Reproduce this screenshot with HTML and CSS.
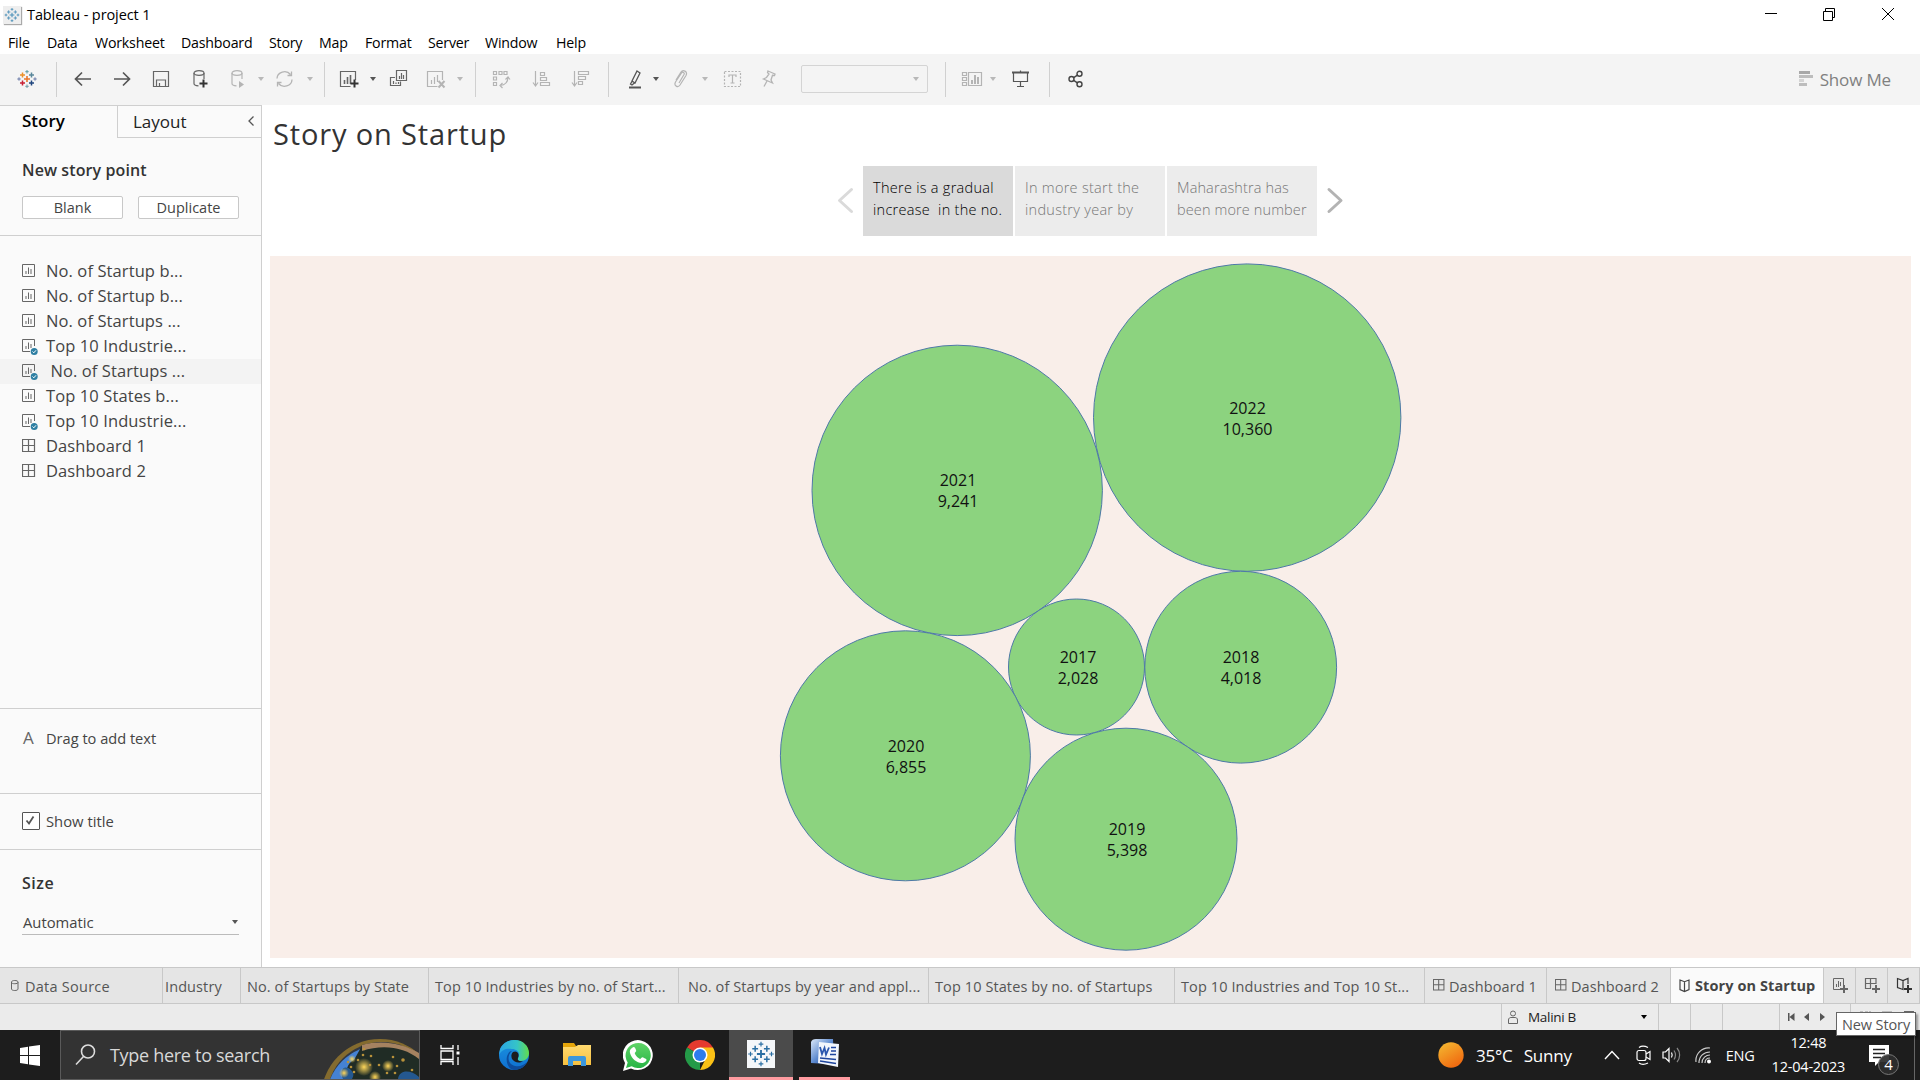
FILE: index.html
```html
<!DOCTYPE html>
<html lang="en">
<head>
<meta charset="utf-8">
<title>Tableau - project 1</title>
<link rel="stylesheet" href="styles.css">
</head>
<body>
<svg class="defs" width="0" height="0" aria-hidden="true">
  <defs>
    <linearGradient id="edgeA" x1="0" y1="0" x2="1" y2="0"><stop offset="0" stop-color="#2aa5e6"/><stop offset=".6" stop-color="#35c4c8"/><stop offset="1" stop-color="#63dd4a"/></linearGradient>
    <linearGradient id="edgeB" x1="0" y1="0" x2="0" y2="1"><stop offset="0" stop-color="#1b95e0"/><stop offset="1" stop-color="#0f6fd0"/></linearGradient>
    <linearGradient id="wa" x1="0" y1="0" x2="0" y2="1"><stop offset="0" stop-color="#5fd467"/><stop offset="1" stop-color="#28b446"/></linearGradient>
    <linearGradient id="fold" x1="0" y1="0" x2="0" y2="1"><stop offset="0" stop-color="#ffda70"/><stop offset="1" stop-color="#f7c040"/></linearGradient>
    <linearGradient id="sun" x1="0" y1="0" x2=".6" y2="1"><stop offset="0" stop-color="#f4bd33"/><stop offset="1" stop-color="#f06a10"/></linearGradient>
    <linearGradient id="wordA" x1="0" y1="0" x2="1" y2="1"><stop offset="0" stop-color="#dce8f8"/><stop offset=".5" stop-color="#5f8cd0"/><stop offset="1" stop-color="#143d94"/></linearGradient>
    <radialGradient id="glow"><stop offset="0" stop-color="#ffd75a"/><stop offset="1" stop-color="#ffd75a" stop-opacity="0"/></radialGradient>
  </defs>
  <symbol id="caret" viewBox="0 0 8 6"><path d="M1 1h6L4 5z"/></symbol>
  <symbol id="sheet" viewBox="0 0 16 16"><path d="M.5.5h12v12H.5z" fill="none" stroke="#666"/><path d="M4 7v3M6.500 3.500v6.500M9 5v5" stroke="#666"/></symbol>
  <symbol id="sheetcheck" viewBox="0 0 16 16"><path d="M12.500 7V.5H.5v12H8" fill="none" stroke="#666"/><path d="M4 7v3M6.500 3.500v6.500M9 5v4" stroke="#666"/><circle cx="12.200" cy="12.500" r="3.500" fill="#2e7fa3"/><path d="M10.500 12.500l1.300 1.300 2.200-2.500" fill="none" stroke="#fff"/></symbol>
  <symbol id="dash" viewBox="0 0 16 16"><path d="M.5.5h12v12H.5zM6.500.5v12M.5 6.500h12" fill="none" stroke="#666" stroke-width="1.200"/></symbol>
  <symbol id="book" viewBox="0 0 14 14"><path d="M1 1l4.500 1.700L10 1v9.500L5.500 12.500 1 10.500zM5.500 2.700v9.800" fill="none" stroke="currentColor" stroke-width="1.200"/></symbol>
  <symbol id="tableau" viewBox="0 0 24 24"><path d="M12 8.500v7M8.500 12h7" stroke-width="1.600"/><path d="M7 5v5M4.500 7.500h5M17 5v5M14.500 7.500h5M7 14v5M4.500 16.500h5M17 14v5M14.500 16.500h5" stroke-width="1.300"/><path d="M12 1.500v4M10 3.500h4M12 18.500v4M10 20.500h4M3 10v4M1 12h4M21 10v4M19 12h4"/></symbol>
</svg>

<header class="titlebar">
  <span class="appicon"><svg width="16" height="16" stroke="#4a90b8" stroke-width="1.300"><use href="#tableau"/></svg></span>
  <span class="apptitle">Tableau - project 1</span>
  <svg class="winbtns" width="132" height="24" fill="none" stroke="#000"><path d="M1 13.500h12M59.500 11.500h9v9h-9zM61.500 11V8.500h9v9h-2M118 8l12 12M130 8l-12 12"/></svg>
</header>
<nav class="menu"><span>File</span><span>Data</span><span>Worksheet</span><span>Dashboard</span><span>Story</span><span>Map</span><span>Format</span><span>Server</span><span>Window</span><span>Help</span></nav>

<div class="toolbar">
  <svg class="g15" width="24" height="24" viewBox="0 0 24 24"><path d="M12 9v6M9 12h6" stroke="#e8762b" stroke-width="1.600"/><path d="M7.500 5.500v5M5 8h5" stroke="#eb9129" stroke-width="1.500"/><path d="M16.500 5.500v5M14 8h5" stroke="#59879b" stroke-width="1.500"/><path d="M7.500 13.500v5M5 16h5" stroke="#c72035" stroke-width="1.500"/><path d="M16.500 13.500v5M14 16h5" stroke="#1f457e" stroke-width="1.500"/><path d="M12 3v3.500M10.300 4.700h3.400" stroke="#5b9aa0"/><path d="M12 17.500V21M10.300 19.300h3.400" stroke="#7099a6"/><path d="M4 10.300v3.400M2.300 12h3.400M20 10.300v3.400M18.300 12h3.400" stroke="#6b7ba8"/></svg>
  <i class="sep g17"></i>
  <svg class="g16" width="20" height="20" fill="none" stroke="#555" stroke-width="1.700"><path d="M18 10H3M9 3.500L2.500 10 9 16.500"/></svg>
  <svg class="g19" width="20" height="20" fill="none" stroke="#555" stroke-width="1.700"><path d="M2 10h15M11 3.500l6.500 6.500-6.500 6.500"/></svg>
  <svg class="g19" width="20" height="20" fill="none" stroke="#666" stroke-width="1.200"><path d="M2.500 2.500h15v15h-15zM5.500 17v-6h9v6M8.500 17v-3"/></svg>
  <svg class="g19" width="20" height="20" fill="none" stroke="#666" stroke-width="1.200"><ellipse cx="9" cy="4" rx="5" ry="2.300"/><path d="M4 4v10.500c0 1.400 2 2.200 4.500 2.400M14 4v6"/><path d="M13.500 10.500v8M9.500 14.500h8" stroke="#333" stroke-width="2"/></svg>
  <svg class="g17" width="20" height="20" fill="none" stroke="#b4b4b4" stroke-width="1.200"><ellipse cx="10" cy="4" rx="5" ry="2.300"/><path d="M5 4v10.500c0 1.400 2 2.200 4.500 2.400M15 4v6"/><path d="M12 12l5 3.500-5 3.500z" fill="#b4b4b4" stroke="none"/></svg>
  <svg class="caret off g10"><use href="#caret"/></svg>
  <svg class="g10" width="20" height="20" fill="none" stroke="#b4b4b4" stroke-width="1.300"><path d="M2 9.500a7.500 7 0 0 1 13.500-4M17 10.500a7.500 7 0 0 1-13.500 4M16.500 2.500v4h-4M2.500 17.500v-4h4"/></svg>
  <svg class="caret off g11"><use href="#caret"/></svg>
  <i class="sep g10"></i>
  <svg class="g14" width="20" height="20" fill="none" stroke="#666" stroke-width="1.200"><path d="M16.500 11V2.500h-15v15h10"/><path d="M5.500 11v4M8.500 8v7M11.500 6v9" stroke-width="1.600"/><path d="M15.500 10.500v8M11.500 14.500h8" stroke="#333" stroke-width="2"/></svg>
  <svg class="caret on g10"><use href="#caret"/></svg>
  <svg class="g11" width="20" height="20" fill="none" stroke="#666" stroke-width="1.200"><path d="M8.500 1.500h10v10h-10zM7 8.500H2.500v8h10v-4M5.500 12v3M8 13.500V15M10.500 13v2M11.500 7v3M13.500 4v6M15.500 6v4"/></svg>
  <svg class="g18" width="20" height="20" fill="none" stroke="#b4b4b4" stroke-width="1.200"><path d="M16.500 11V2.500h-15v15h10M5.500 11v4M8.500 8v7M11.500 6v7"/><path d="M12.500 12l6 6.500M18.500 12l-6 6.500" stroke-width="2"/></svg>
  <svg class="caret off g10"><use href="#caret"/></svg>
  <i class="sep g11"></i>
  <svg class="g15" width="20" height="20" fill="none" stroke="#b4b4b4" stroke-width="1.200"><path d="M2.500 2.500h3v3h-3zM8 2.500h3v3H8zM13 2.500h3v3h-3zM2.500 8h3v3h-3zM2.500 13.500h3v3h-3z"/><path d="M17 8c0 5-3 8-8 8.500M14.500 10.500L17 8l2 2.500M11.500 14L9 16.500l2.500 2.500"/></svg>
  <svg class="g20" width="20" height="20" fill="none" stroke="#b4b4b4" stroke-width="1.200"><path d="M4.500 2v14M2 13.500L4.500 17 7 13.500M9.500 3.500h4v3h-4zM9.500 8.500h6v3h-6zM9.500 13.500h9v3h-9z"/></svg>
  <svg class="g19" width="20" height="20" fill="none" stroke="#b4b4b4" stroke-width="1.200"><path d="M4.500 2v14M2 13.500L4.500 17 7 13.500M8.500 2.500h10v3h-10zM8.500 7.500h7v3h-7zM8.500 12.500h4v3h-4z"/></svg>
  <i class="sep g18"></i>
  <svg class="g16" width="20" height="20" fill="none" stroke="#555" stroke-width="1.300"><path d="M12 2l3 2-5 10-3-2zM7.500 11.500L5.500 15l1.500 1 3-2.500"/><path d="M4 18.500h12" stroke-width="2"/></svg>
  <svg class="caret on g7"><use href="#caret"/></svg>
  <svg class="g11" width="20" height="20" fill="none" stroke="#b4b4b4" stroke-width="1.200"><path d="M8 14l5-8.500c1-2-1.500-3-2.500-1.500L4.500 13c-2 4 2.500 6 4.500 3l6-9.500c2-4-3-6.500-5-3.500L5 11"/></svg>
  <svg class="caret off g10"><use href="#caret"/></svg>
  <svg class="g13" width="20" height="20" fill="none" stroke="#b4b4b4" stroke-width="1.200"><path d="M2.500 2.500h16v15h-16z" stroke-dasharray="2 1.500"/><path d="M7 8V6h7v2M10.500 6v8M8.500 14h4"/></svg>
  <svg class="g17" width="20" height="20" fill="none" stroke="#b4b4b4" stroke-width="1.300"><path d="M9 2l7 3-.5 1.500-2-.2L12 11l1.500 3-9-4 3-1.500L10 5 8.500 3.500zM8 12l-3 5.500"/></svg>
  <div class="combo g22"><svg class="caret off"><use href="#caret"/></svg></div>
  <i class="sep g17"></i>
  <svg class="g15" width="22" height="20" fill="none" stroke="#b4b4b4" stroke-width="1.200"><path d="M1.500 3.500h4v3h-4zM1.500 8.500h4v3h-4zM1.500 13.500h4v3h-4zM7.500 3.500h13v13h-13z"/><path d="M11 11v4M14 6v9M17 8v7" stroke-width="2"/></svg>
  <svg class="caret off g6"><use href="#caret"/></svg>
  <svg class="g13" width="20" height="20" fill="none" stroke="#555" stroke-width="1.200"><path d="M3.500 4v8.500h14V4M10.500 1.500V3M10.500 12.500v5M7 17.500h7"/><path d="M2 3.500h17" stroke-width="2"/></svg>
  <i class="sep g19"></i>
  <svg class="g16" width="20" height="20" fill="none" stroke="#444" stroke-width="1.400"><circle cx="5.500" cy="10" r="2.500"/><circle cx="13.500" cy="4.800" r="2.500"/><circle cx="13.500" cy="15.200" r="2.500"/><path d="M7.700 8.700l3.700-2.500M7.700 11.300l3.700 2.500"/></svg>
  <div class="showme"><svg width="14" height="16"><path d="M0 0h11v3H0z" fill="#a8a8a8"/><path d="M0 4h14v3H0zM0 12h8v3H0z" fill="#bdbdbd"/><path d="M0 8h5v3H0z" fill="#d4d4d4"/></svg><span>Show Me</span></div>
</div>

<main class="workspace">
  <aside class="side">
    <div class="tabs"><div class="tab active">Story</div><div class="tab other"><span>Layout</span><svg width="8" height="12" fill="none" stroke="#555" stroke-width="1.300"><path d="M6.500 1.500L2 6l4.500 4.500"/></svg></div></div>
    <section class="newpoint"><h2>New story point</h2><div class="buttons"><button>Blank</button><button>Duplicate</button></div></section>
    <ul class="sheets">
      <li><svg><use href="#sheet"/></svg>No. of Startup b...</li>
      <li><svg><use href="#sheet"/></svg>No. of Startup b...</li>
      <li><svg><use href="#sheet"/></svg>No. of Startups ...</li>
      <li><svg><use href="#sheetcheck"/></svg>Top 10 Industrie...</li>
      <li class="hover"><svg><use href="#sheetcheck"/></svg>&nbsp;No. of Startups ...</li>
      <li><svg><use href="#sheet"/></svg>Top 10 States b...</li>
      <li><svg><use href="#sheetcheck"/></svg>Top 10 Industrie...</li>
      <li><svg><use href="#dash"/></svg>Dashboard 1</li>
      <li><svg><use href="#dash"/></svg>Dashboard 2</li>
    </ul>
    <section class="drag"><b>A</b><span>Drag to add text</span></section>
    <section class="showtitle"><i class="check"><svg width="16" height="16" fill="none" stroke="#555" stroke-width="1.800"><path d="M3.500 7.500l2.500 3 4.500-7"/></svg></i><span>Show title</span></section>
    <section class="size"><h2>Size</h2><div class="select"><span>Automatic</span><svg class="caret on"><use href="#caret"/></svg></div></section>
  </aside>

  <section class="story">
    <h1>Story on Startup</h1>
    <div class="points">
      <svg width="20" height="30" fill="none" stroke="#dadada" stroke-width="3" stroke-linecap="round" stroke-linejoin="round"><path d="M15.500 3.500L3.500 14.500l12 11"/></svg>
      <div class="point current">There is a gradual<br>increase&nbsp; in the no.</div>
      <div class="point">In more start the<br>industry year by</div>
      <div class="point">Maharashtra has<br>been more number</div>
      <svg class="next" width="20" height="30" fill="none" stroke="#b3b3b3" stroke-width="3" stroke-linecap="round" stroke-linejoin="round"><path d="M4 3.500l12 11-12 11"/></svg>
    </div>
    <svg class="viz" width="1641" height="702" viewBox="270 256 1641 702">
      <g fill="#8cd37f" stroke="#4e79a7">
        <circle cx="1247.200" cy="417.600" r="153.700"/><circle cx="957.200" cy="490.400" r="145.200"/><circle cx="1076.500" cy="667" r="68"/><circle cx="1240.700" cy="667.200" r="95.900"/><circle cx="905.400" cy="755.800" r="125"/><circle cx="1126" cy="839.200" r="111"/>
      </g>
      <g class="marks">
        <text x="1247.500" y="414">2022</text><text x="1247.500" y="435">10,360</text>
        <text x="958" y="486">2021</text><text x="958" y="507">9,241</text>
        <text x="1078" y="663">2017</text><text x="1078" y="684">2,028</text>
        <text x="1241" y="663">2018</text><text x="1241" y="684">4,018</text>
        <text x="906" y="752">2020</text><text x="906" y="773">6,855</text>
        <text x="1127" y="835">2019</text><text x="1127" y="856">5,398</text>
      </g>
    </svg>
  </section>
</main>

<nav class="sheettabs">
  <div class="source"><svg width="10" height="14" fill="none" stroke="#666"><path d="M1.500 3c0-2 6.500-2 6.500 0v7c0 2-6.500 2-6.500 0zM1.500 3.500c0 1.600 6.500 1.600 6.500 0"/></svg><span>Data Source</span></div>
  <div class="cut">Industry</div>
  <div>No. of Startups by State</div>
  <div>Top 10 Industries by no. of Start...</div>
  <div class="lead">No. of Startups by year and appl...</div>
  <div>Top 10 States by no. of Startups</div>
  <div>Top 10 Industries and Top 10 St...</div>
  <div class="iconed"><svg><use href="#dash"/></svg><span>Dashboard 1</span></div>
  <div class="iconed"><svg><use href="#dash"/></svg><span>Dashboard 2</span></div>
  <div class="iconed current"><svg><use href="#book"/></svg><span>Story on Startup</span></div>
  <div class="new"><svg width="18" height="18" fill="none" stroke="#666"><path d="M11.500 8V1.500h-10v11H8M4.500 7v3M6.500 4v6M8.500 5v4"/><path d="M12 8v8M8 12h8" stroke-width="2"/></svg></div>
  <div class="new"><svg width="18" height="18" fill="none" stroke="#666" stroke-width="1.200"><path d="M12 7V1.500H1.500v10H7M6.500 1.500v10M1.500 6.500H12"/><path d="M12 8v8M8 12h8" stroke-width="2"/></svg></div>
  <div class="new"><svg width="18" height="18" fill="none" stroke="#333" stroke-width="1.200"><path d="M12 7V1.500L7 3.500 1.500 1.500v9L7 12.500v-9"/><path d="M12 8v8M8 12h8" stroke-width="2"/></svg></div>
</nav>

<div class="status">
  <div></div>
  <div class="user"><svg width="12" height="16" fill="none" stroke="#666"><circle cx="6" cy="4.500" r="2.500"/><path d="M1.500 14.500v-3.500c0-2 1.500-2.500 2.500-2.500h4c1 0 2.500.5 2.500 2.500v3.500z"/></svg><span>Malini B</span><svg class="caret black"><use href="#caret"/></svg></div>
  <div></div><div></div><div></div>
  <div class="nav"><svg width="50" height="10" fill="#555"><path d="M1 1h1.500v8H1zM7.500 1v8L2.500 5zM22 1v8l-5-4zM33 1v8l5-4z"/></svg></div>
  <div class="views"><svg width="70" height="4" fill="#bdbdbd"><path d="M9 0h3v2H9zM14 0h3v2h-3zM18 0h2v2h-2zM31 0h10v2H31z"/><path d="M53 0h10v2H53z" fill="#666"/></svg></div>
  <div class="tooltip">New Story</div>
</div>

<footer class="taskbar">
  <svg class="start" width="20" height="21" fill="#fff"><path d="M0 3l8-1.200V10H0zM9 1.600L20 0v10H9zM0 11h8v8.200L0 18zM9 11h11v10L9 19.400z"/></svg>
  <div class="search">
    <svg width="24" height="24" fill="none" stroke="#ddd" stroke-width="1.600"><circle cx="14" cy="8.500" r="6.500"/><path d="M9.500 13.500L2 21.500"/></svg>
    <span>Type here to search</span>
    <svg class="globe" width="101" height="48" viewBox="0 0 101 48"><circle cx="62" cy="67" r="59" fill="#b18a2c" opacity=".65"/><circle cx="64" cy="66" r="55" fill="#333842"/><circle cx="63" cy="69" r="55" fill="#4582d4"/><path d="M27 48c2-9 1-15 9-19l5-9 3-6c18-5 39-2 58 9v25z" fill="#202c25"/><path d="M44 14c20-5 39-2 57 8v6C86 16 65 13 44 20z" fill="#a58260"/><path d="M25 48c-4-9 1-15 8-9 4 4 2 7 1 9zM80 48c1-9 12-10 21-2v2z" fill="#245890"/><g fill="url(#glow)"><circle cx="46" cy="36" r="9"/><circle cx="70" cy="35" r="6"/><circle cx="57" cy="46" r="6"/><circle cx="26" cy="42" r="5"/><circle cx="34" cy="28" r="4"/></g><g fill="#b8923a"><circle cx="46" cy="18" r="1.300"/><circle cx="45" cy="24" r="1.300"/><circle cx="53" cy="25" r="1.300"/><circle cx="40" cy="29" r="1.300"/><circle cx="30" cy="31" r="1.300"/><circle cx="75" cy="26" r="1.300"/><circle cx="85" cy="29" r="1.800"/><circle cx="61" cy="34" r="1.300"/><circle cx="52" cy="34" r="1.300"/><circle cx="79" cy="35" r="1.300"/><circle cx="94" cy="39" r="1.300"/><circle cx="33" cy="36" r="1.300"/><circle cx="36" cy="41" r="1.300"/><circle cx="69" cy="42" r="1.300"/><circle cx="77" cy="42" r="1.300"/></g></svg>
  </div>
  <div class="apps">
    <div><svg width="20" height="20" fill="none" stroke="#fff" stroke-width="1.300"><path d="M1 0v3.500h12V0M1 20v-3.500h12V20M1 6h12v8.500H1zM18 0v5M18 12v8"/><path d="M18 6.500v3" stroke-width="3"/></svg></div>
    <div><svg width="30" height="30"><circle cx="15" cy="15" r="15" fill="url(#edgeB)"/><path d="M1 9C5 1 12 0 16 0c8 0 14 6 14 13 0 5-4 8-8 8-3 0-4-1-3-3 3-5-1-9-6-9-5-1-10 0-13 6z" fill="url(#edgeA)"/><path d="M13 11c-5 4-5 13 3 15 5 1 9-1 12-4-3 6-8 8-13 8C8 29 6 19 9 14c1-2 2-3 4-3z" fill="#0d4c9c"/><path d="M14 12c4-2 7 2 5 6-1 2 1 4 5 3-4 3-9 1-11-2-1-3-1-5 1-7z" fill="#1d1d1d"/></svg></div>
    <div><svg width="28" height="24"><path d="M0 0h11l2 3h15v19H0z" fill="#e5a50a"/><path d="M0 4h12l3-2h13v20H0z" fill="url(#fold)"/><path d="M5 23v-8q0-2 2-2h14q2 0 2 2v8h-5v-5h-8v5z" fill="#3c97dc"/></svg></div>
    <div><svg width="30" height="31"><path d="M0 31l2-8A15 15 0 1 1 8 28.500z" fill="#fff"/><path d="M3 28l1.700-5.500a12.600 12.600 0 1 1 4 3.800z" fill="url(#wa)"/><path d="M9 8c2-2 3-1 4 2 1 2-2 2-1 4 1 2 3 4 5 5 1 0 2-3 4-1 3 1 3 2 2 3-4 5-14 0-16-8-.500-2 0-4 2-5z" fill="#fff"/></svg></div>
    <div><svg width="30" height="30" viewBox="0 0 30 30"><path d="M15 15L2 7.500a15 15 0 0 1 26 0z" fill="#e53a2f"/><path d="M15 15V30A15 15 0 0 1 2 7.500z" fill="#249a48"/><path d="M15 7.500h13A15 15 0 0 1 15 30l6-12z" fill="#fbc116"/><circle cx="15" cy="15" r="7.500" fill="#fff"/><circle cx="15" cy="15" r="6" fill="#2e7cee"/></svg></div>
    <div class="open lit"><svg class="tile" width="28" height="28" stroke="#2b6fa3"><use href="#tableau"/></svg></div>
    <div class="open word"><svg width="30" height="30"><path d="M1 3q1-3 5-3h17l1 22-7 3-16-1z" fill="url(#wordA)"/><path d="M9 3l20 2-1 23-20-4z" fill="#f2f6fc"/><path d="M10 8l2 7L14.500 9l1.500 6.500 3-7" fill="none" stroke="#2b57ae" stroke-width="1.800"/><path d="M21 8.500h5M21 12h5M20 15.500h6M10 19l16 1.500M10 22l16 2.500" stroke="#1f469e" stroke-width="1.700"/></svg></div>
  </div>
  <div class="weather"><svg width="26" height="26"><circle cx="13" cy="13" r="12.700" fill="url(#sun)"/></svg><span class="t1">35°C</span><span>Sunny</span></div>
  <div class="tray">
    <svg width="16" height="10" fill="none" stroke="#fff" stroke-width="1.400"><path d="M1 9l7-7.500L15 9"/></svg>
    <svg class="g16" width="16" height="20" fill="none" stroke="#fff" stroke-width="1.200"><rect x="1" y="5.500" width="9" height="10" rx="2"/><path d="M10 9l4-2.500v8L10 12M3 2.500c2-1.500 6-1.500 9 0M3 18c2 1.500 6 1.500 9 0"/></svg>
    <svg class="g10" width="20" height="18" fill="none" stroke="#fff" stroke-width="1.200"><path d="M1 6v6h2.500L7 15.500v-13L3.500 6zM9.500 6.500c1 2 1 3.500 0 5"/><path d="M12 4.500c2 3 2 6 0 9M15 2c3.500 4 3.500 10 0 14" stroke="#888"/></svg>
    <svg class="g13" width="16" height="18" fill="none" stroke="#ccc" stroke-width="1.200"><path d="M1 16C0 8 7 1 15 2M4 17c0-7 5-11 11-11M7 17c0-5 4-8 8-8M10 17c0-3 2-5 5-5"/><circle cx="14" cy="15.500" r="2" fill="#fff" stroke="none"/></svg>
    <span class="lang">ENG</span>
    <div class="clock"><span class="time">12:48</span><span>12-04-2023</span></div>
    <svg class="notif" width="32" height="34"><path d="M1 2h20v17H11l-4 4v-4H1z" fill="#fff"/><path d="M5 6.500h12M5 10.500h12M5 14.500h8" stroke="#222" stroke-width="1.300"/><circle cx="20.500" cy="21.500" r="10" fill="#2d2d2d" fill-opacity=".93" stroke="#777"/><text x="20.500" y="27">4</text></svg>
    <i class="edge"></i>
  </div>
</footer>
</body>
</html>
```
FILE: styles.css
```css
* { box-sizing: border-box; }
html, body { margin: 0; width: 1920px; height: 1080px; overflow: hidden; }
body { font-family: "Open Sans", "Noto Sans", sans-serif; color: #333; background: #fff; display: flex; flex-direction: column; }
svg { display: block; flex: none; }
h1, h2 { margin: 0; }
.defs { position: absolute; }

/* title and menu */
.titlebar { height: 29px; display: flex; align-items: center; padding-left: 3px; }
.appicon { width: 18px; height: 18px; padding: 1px; background: #eee; box-shadow: 1px 1px 1px #aaa; }
.apptitle { margin-left: 6px; font-size: 14.500px; letter-spacing: -.1px; color: #000; }
.winbtns { margin: 0 24px 5px auto; }
.menu { height: 25px; display: grid; grid-template-columns: 39px 48px 86px 88px 50px 46px 63px 57px 71px 60px; padding-left: 8px; line-height: 27px; font-size: 14.200px; letter-spacing: -.2px; color: #000; white-space: nowrap; }

/* toolbar */
.toolbar { height: 51px; flex: none; display: flex; align-items: center; padding-bottom: 1px; background: #f4f4f4; }
.sep { width: 1px; height: 35px; background: #d0d0d0; }
.caret { width: 8px; height: 6px; }
.caret.on { fill: #555; }
.caret.off { fill: #b8b8b8; }
.caret.black { fill: #000; }
.combo { width: 127px; height: 28px; border: 1px solid #d4d4d4; border-radius: 2px; display: flex; align-items: center; justify-content: flex-end; padding-right: 7px; }
.showme { margin: 0 29px 0 auto; display: flex; align-items: center; gap: 7px; font-size: 17px; letter-spacing: -.15px; color: #808080; }
.g6 { margin-left: 6px; } .g7 { margin-left: 7px; } .g10 { margin-left: 10px; } .g11 { margin-left: 11px; }
.g13 { margin-left: 13px; } .g14 { margin-left: 14px; } .g15 { margin-left: 15px; } .g16 { margin-left: 16px; }
.g17 { margin-left: 17px; } .g18 { margin-left: 18px; } .g19 { margin-left: 19px; } .g20 { margin-left: 20px; } .g22 { margin-left: 22px; }

/* workspace */
.workspace { height: 862px; flex: none; display: flex; }
.side { width: 262px; flex: none; background: #fafafa; border-top: 1px solid #cfcfcf; border-right: 1px solid #cfcfcf; display: flex; flex-direction: column; }
.tabs { display: grid; grid-template-columns: 117px 1fr; height: 32px; font-size: 17px; }
.tab.active { padding-left: 22px; line-height: 29px; font-weight: 600; font-size: 17px; color: #000; }
.tab.other { border-left: 1px solid #cfcfcf; border-bottom: 1px solid #cfcfcf; padding: 0 6px 0 15px; display: flex; justify-content: space-between; align-items: center; color: #222; }
.tab.other svg { margin-bottom: 2px; }
h2 { font-size: 16px; font-weight: 600; line-height: 22px; letter-spacing: .1px; color: #333; }
.newpoint { height: 98px; padding: 21px 22px 0; border-bottom: 1px solid #cfcfcf; }
.buttons { display: flex; gap: 15px; margin-top: 15px; }
.buttons button { width: 101px; height: 23px; padding: 0; border: 1px solid #c8c8c8; border-radius: 2px; background: #fff; font: 14.500px/20px "Open Sans", sans-serif; color: #444; }
.sheets { list-style: none; margin: 0; padding: 23px 0 0; height: 472px; font-size: 16.500px; letter-spacing: .1px; color: #444; }
.sheets li { height: 25px; display: flex; align-items: center; padding: 0 0 2px 22px; white-space: pre; }
.sheets li svg { width: 16px; height: 16px; margin: 2px 8px 0 0; }
.sheets .hover { background: #f3f3f3; }
.drag { height: 85px; border-top: 1px solid #cfcfcf; padding: 18px 0 0 23px; display: flex; font-size: 14.600px; line-height: 22px; color: #444; }
.drag b { width: 23px; font-weight: 400; font-size: 17px; color: #666; }
.showtitle { height: 56px; border-top: 1px solid #cfcfcf; padding: 0 0 1px 22px; display: flex; align-items: center; gap: 6px; font-size: 14.800px; color: #444; }
.check { width: 18px; height: 18px; border: 1px solid #555; border-radius: 1px; background: #fff; }
.size { flex: 1; border-top: 1px solid #cfcfcf; padding: 22px 22px 0; }
.size h2 { letter-spacing: .5px; }
.select { margin-top: 17px; height: 24px; width: 217px; border-bottom: 1px solid #bbb; padding: 0 0 2px 1px; display: flex; justify-content: space-between; align-items: center; font-size: 14.800px; color: #444; }
.story { flex: 1; padding: 0 0 0 8px; display: flex; flex-direction: column; }
.story h1 { height: 61px; padding: 9px 0 0 3px; font-size: 29px; line-height: 40px; font-weight: 400; color: #333; letter-spacing: .85px; }
.points { height: 70px; display: flex; align-items: center; gap: 2px; padding-left: 566px; }
.points > svg { margin-right: 5px; }
.points .next { margin: 0 0 0 6px; }
.point { width: 150px; height: 70px; padding: 11px 0 0 10px; background: #ececec; color: #777; font-size: 14.500px; line-height: 22px; letter-spacing: .28px; font-weight: 300; white-space: nowrap; }
.point:nth-child(4) { letter-spacing: .12px; }
.point.current { background: #dadada; color: #000; }
.viz { margin-top: 20px; background: #f9eee9; }
.marks { font-size: 16px; text-anchor: middle; fill: #111; }

/* sheet tabs */
.sheettabs { height: 37px; flex: none; display: grid; grid-template-columns: 163px 78px 188px 250px 250px 246px 250px 122px 124px 153px 32px 32px 32px; background: #e5e5e5; border-top: 1px solid #c8c8c8; border-bottom: 1px solid #c8c8c8; font-size: 14.500px; letter-spacing: .1px; color: #555; }
.sheettabs > div { border-right: 1px solid #c8c8c8; display: flex; align-items: center; padding: 1px 0 0 6px; white-space: nowrap; overflow: hidden; }
.sheettabs .source { padding-left: 10px; gap: 5px; letter-spacing: .25px; }
.sheettabs .cut { padding-left: 2px; }
.sheettabs .lead { padding-left: 9px; }
.sheettabs .iconed { padding-left: 8px; }
.iconed svg { width: 14px; height: 14px; margin-right: 2px; }
.sheettabs .current { background: #fafafa; font-weight: 700; color: #444; padding-top: 0; }
.sheettabs .new { padding-left: 8px; }

/* status bar */
.status { height: 26px; flex: none; position: relative; display: grid; grid-template-columns: 1502px 157px 32px 32px 57px 71px 1fr; background: #ebebeb; }
.status > div { border-right: 1px solid #c8c8c8; }
.status .user { display: flex; align-items: center; padding: 0 10px 0 5px; font-size: 13.500px; color: #222; letter-spacing: -.3px; }
.user span { margin: 0 auto 0 9px; }
.status .nav { display: flex; align-items: center; padding: 0 0 1px 7px; }
.status .views { padding-top: 7px; border: 0; overflow: hidden; }
.status .tooltip { position: absolute; left: 1836px; top: 8px; width: 80px; height: 24px; border: 1px solid #666; background: #fff; color: #555; font-size: 14.500px; line-height: 23px; text-align: center; letter-spacing: -.1px; box-shadow: 2px 2px 2px rgba(0,0,0,.35); z-index: 2; white-space: nowrap; }

/* taskbar */
.taskbar { height: 50px; flex: none; display: flex; align-items: center; background: #1d1d1d; color: #fff; }
.start { margin: 0 20px; }
.search { width: 360px; height: 50px; background: #333; border: 1px solid #5a5a5a; display: flex; align-items: center; padding-left: 13px; font-size: 18px; color: #d8d8d8; white-space: nowrap; }
.search span { margin-left: 12px; letter-spacing: -.3px; }
.search .globe { margin-left: auto; }
.apps { display: grid; grid-template-columns: 60px 67px 59px 64px 60px 63px 65px; height: 50px; }
.apps > div { display: flex; align-items: center; justify-content: center; }
.apps .open { border-bottom: 3px solid #ff9ba0; padding-top: 1px; }
.apps .lit { background: #4b4b4b; margin: 0 0 0 -1px; }
.apps .word { margin: 0 8px 0 6px; }
.tile { background: #f5f7f9; }
.weather { margin-left: 580px; display: flex; align-items: center; font-size: 17px; letter-spacing: -.2px; }
.weather .t1 { margin: 0 11px 0 12px; }
.tray { flex: 1; display: flex; align-items: center; margin-left: 32px; }
.lang { margin-left: 15px; font-size: 14.500px; letter-spacing: -.3px; }
.clock { width: 92px; margin-left: 8px; display: flex; flex-direction: column; align-items: center; font-size: 14.500px; line-height: 24px; letter-spacing: -.2px; }
.notif { margin: 10px 0 0 14px; }
.notif text { font-size: 15px; text-anchor: middle; fill: #fff; }
.edge { width: 1px; height: 50px; background: #666; margin: 0 5px 0 auto; }
```
